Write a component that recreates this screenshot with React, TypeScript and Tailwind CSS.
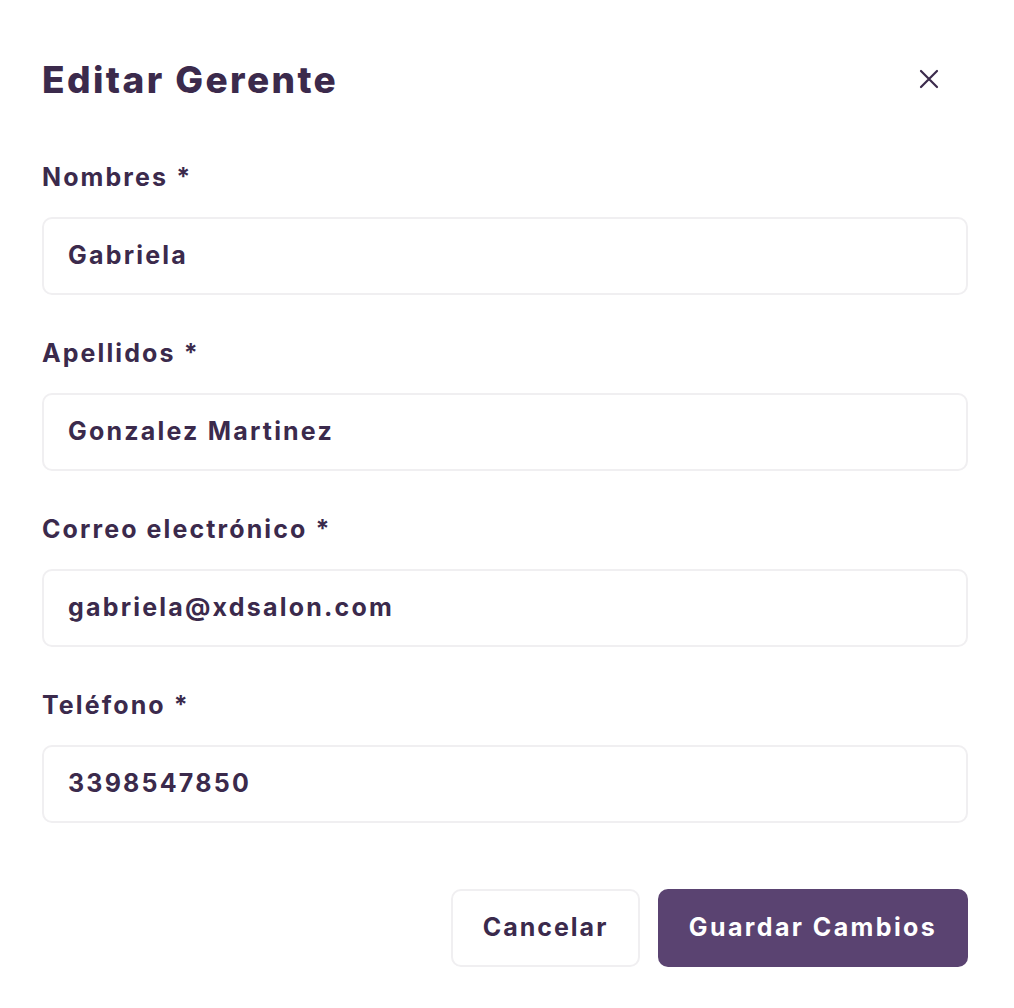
const fields = [
  { label: "Nombres *", value: "Gabriela" },
  { label: "Apellidos *", value: "Gonzalez Martinez" },
  { label: "Correo electrónico *", value: "gabriela@xdsalon.com" },
  { label: "Teléfono *", value: "3398547850" },
];

export default function App() {
  return (
    <div
      className="w-[1014px] h-[1008px] bg-white text-[#3b2a4c] pl-[42px] pr-[46px] pt-[54px]"
      style={{ fontFamily: "Inter, 'Noto Sans', sans-serif" }}
    >
      {/* Header */}
      <div className="flex items-center justify-between h-[50px]">
        <h1 className="text-[37px] font-extrabold leading-none tracking-[2.4px]">Editar Gerente</h1>
        <button className="w-[20px] h-[20px] mr-[29px] flex items-center justify-center">
          <svg width="20" height="20" viewBox="0 0 20 20" fill="none" stroke="#3b2a4c" strokeWidth="2.2" strokeLinecap="round">
            <path d="M2 2 L18 18 M18 2 L2 18" />
          </svg>
        </button>
      </div>

      {/* Form */}
      <div className="mt-[58px] flex flex-col gap-[43px]">
        {fields.map((f) => (
          <div key={f.label} className="flex flex-col">
            <label className="text-[25px] font-bold leading-[30px] tracking-[2.1px]">{f.label}</label>
            <div className="mt-[25px] h-[78px] rounded-[10px] border-2 border-[#f0eff1] flex items-center px-[24px]">
              <span className="text-[25px] font-bold tracking-[2.2px]">{f.value}</span>
            </div>
          </div>
        ))}
      </div>

      {/* Actions */}
      <div className="mt-[66px] flex justify-end gap-[18px]">
        <button className="w-[189px] h-[78px] rounded-[10px] border-2 border-[#f0eff1] text-[25px] font-bold tracking-[2px]">
          Cancelar
        </button>
        <button className="w-[310px] h-[78px] rounded-[10px] bg-[#5a4371] text-white text-[25px] font-bold tracking-[2.4px]">
          Guardar Cambios
        </button>
      </div>
    </div>
  );
}
